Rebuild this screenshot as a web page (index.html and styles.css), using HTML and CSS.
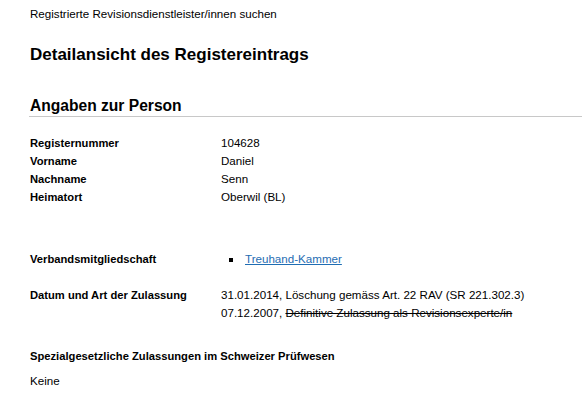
FILE: index.html
```html
<!DOCTYPE html>
<html lang="de">
<head>
<meta charset="utf-8">
<title>Detailansicht des Registereintrags</title>
<link rel="stylesheet" href="styles.css">
</head>
<body>
<div class="page">
  <p class="crumb">Registrierte Revisionsdienstleister/innen suchen</p>
  <h1 class="title">Detailansicht des Registereintrags</h1>
  <h2 class="section">Angaben zur Person</h2>
  <div class="grid basic">
    <div class="label">Registernummer</div><div class="value">104628</div>
    <div class="label">Vorname</div><div class="value">Daniel</div>
    <div class="label">Nachname</div><div class="value">Senn</div>
    <div class="label">Heimatort</div><div class="value">Oberwil (BL)</div>
  </div>
  <div class="grid member">
    <div class="label">Verbandsmitgliedschaft</div>
    <div class="value"><ul class="list"><li><a href="#">Treuhand-Kammer</a></li></ul></div>
  </div>
  <div class="grid admit">
    <div class="label">Datum und Art der Zulassung</div>
    <div class="value">31.01.2014, Löschung gemäss Art. 22 RAV (SR 221.302.3)<br>07.12.2007, <s>Definitive Zulassung als Revisionsexperte/in</s></div>
  </div>
  <div class="special">
    <div class="label">Spezialgesetzliche Zulassungen im Schweizer Prüfwesen</div>
    <p class="none">Keine</p>
  </div>
</div>
</body>
</html>
```
FILE: styles.css
```css
html, body {
  margin: 0;
  padding: 0;
  background: #fff;
}
body {
  font-family: "Liberation Sans", Arial, sans-serif;
  font-size: 11.6px;
  line-height: 18px;
  color: #000;
}
.page {
  padding: 5px 0 0 30px;
}
.crumb {
  margin: 0;
}
.title {
  margin: 20px 0 0;
  font-size: 17px;
  line-height: 24px;
  font-weight: bold;
}
.section {
  margin: 30px 0 0 -1px;
  padding: 0 0 1px 1px;
  font-size: 15.6px;
  line-height: 18px;
  font-weight: bold;
  border-bottom: 1px solid #c8c8c8;
}
.grid {
  display: grid;
  grid-template-columns: 191px 1fr;
}
.label {
  font-weight: bold;
  font-size: 11.2px;
}
.basic {
  margin-top: 17px;
}
.member {
  margin-top: 44px;
}
.admit {
  margin-top: 18px;
}
.list {
  margin: 0;
  padding: 0 0 0 24px;
  list-style: none;
}
.list li {
  position: relative;
}
.list li::before {
  content: "";
  position: absolute;
  left: -16px;
  top: 8px;
  width: 4px;
  height: 4px;
  background: #000;
}
.list a {
  color: #1f6db3;
  text-decoration: underline;
}
.special {
  margin-top: 25px;
}
.none {
  margin: 7px 0 0;
}
```
